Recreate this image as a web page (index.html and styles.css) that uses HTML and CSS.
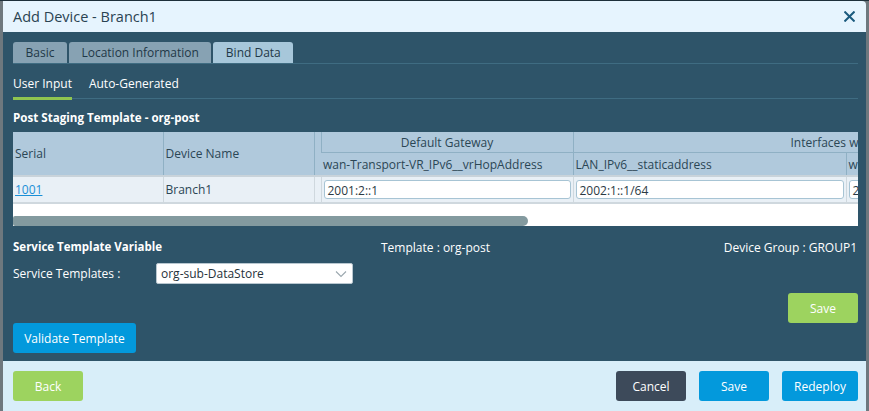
FILE: index.html
```html
<!DOCTYPE html>
<html>
<head>
<meta charset="utf-8">
<link rel="stylesheet" href="styles.css">
</head>
<body>
<div class="dialog">
  <div class="header">
    <span class="title">Add Device - Branch1</span>
    <svg class="close" width="11" height="11" viewBox="0 0 11 11"><path d="M1.2 1.2 L9.8 9.8 M9.8 1.2 L1.2 9.8" stroke="#1b5a7e" stroke-width="2" stroke-linecap="square"/></svg>
  </div>
  <div class="body">
    <div class="tabs">
      <div class="tab">Basic</div>
      <div class="tab">Location Information</div>
      <div class="tab active">Bind Data</div>
    </div>
    <div class="subtabs">
      <div class="subtab active">User Input</div>
      <div class="subtab">Auto-Generated</div>
    </div>
    <div class="section-title">Post Staging Template - org-post</div>
    <div class="grid-wrap">
      <table class="grid">
        <colgroup>
          <col class="c-serial"><col class="c-name"><col class="c-gap"><col class="c-gw"><col class="c-lan"><col class="c-w">
        </colgroup>
        <thead>
          <tr class="h1">
            <th rowspan="2" class="left">Serial</th>
            <th rowspan="2" class="left">Device Name</th>
            <th rowspan="2"></th>
            <th class="group">Default Gateway</th>
            <th colspan="2" class="group wide">Interfaces wan-Transport</th>
          </tr>
          <tr class="h2">
            <th class="left">wan-Transport-VR_IPv6__vrHopAddress</th>
            <th class="left">LAN_IPv6__staticaddress</th>
            <th class="left">wan</th>
          </tr>
        </thead>
        <tbody>
          <tr class="row">
            <td><a class="link">1001</a></td>
            <td>Branch1</td>
            <td></td>
            <td><div class="inp">2001:2::1</div></td>
            <td><div class="inp">2002:1::1/64</div></td>
            <td><div class="inp">2</div></td>
          </tr>
        </tbody>
      </table>
      <div class="scroll"><div class="thumb"></div></div>
    </div>
    <div class="info">
      <div class="info-title">Service Template Variable</div>
      <div class="info-mid">Template : org-post</div>
      <div class="info-right">Device Group : GROUP1</div>
    </div>
    <div class="svc">
      <span class="svc-label">Service Templates :</span>
      <div class="select">org-sub-DataStore
        <svg class="chev" width="12" height="8" viewBox="0 0 12 8"><path d="M1 1.5 L6 6.5 L11 1.5" fill="none" stroke="#9aa7ae" stroke-width="1.1"/></svg>
      </div>
    </div>
    <div class="save-row"><button class="btn green">Save</button></div>
    <div class="validate-row"><button class="btn blue validate">Validate Template</button></div>
  </div>
  <div class="footer">
    <button class="btn green">Back</button>
    <div class="spacer"></div>
    <button class="btn dark">Cancel</button>
    <button class="btn blue">Save</button>
    <button class="btn blue redeploy">Redeploy</button>
  </div>
</div>
</body>
</html>
```
FILE: styles.css
```css
html, body {
  margin: 0;
  padding: 0;
}
body {
  background: #6e787e;
  font-family: "Open Sans", "Noto Sans", sans-serif;
  font-size: 12px;
  width: 869px;
  height: 411px;
  overflow: hidden;
  border-top: 1px solid #1d2f3a;
  box-sizing: border-box;
}
.dialog {
  margin-left: 3px;
  width: 863px;
  height: 410px;
  display: flex;
  flex-direction: column;
  border-top-right-radius: 4px;
  overflow: hidden;
}
.header {
  background: #e6f4fe;
  height: 31px;
  display: flex;
  align-items: center;
  padding: 0 11px 0 10px;
  flex: none;
}
.title {
  flex: 1;
  color: #2a4352;
  font-size: 14.5px;
}
.close {
  display: block;
}
.body {
  background: #2e5469;
  flex: 1;
  padding: 10px 8px 0 10px;
  color: #fff;
}
.tabs {
  display: flex;
  gap: 2px;
  border-bottom: 1px solid #3f6c82;
  height: 21px;
}
.tab {
  background: #87a2b3;
  color: #1f3847;
  padding: 0 12.5px;
  line-height: 21px;
  font-size: 12px;
  border-radius: 3px 3px 0 0;
}
.tab.active {
  background: #a7c7da;
}
.subtabs {
  display: flex;
  gap: 17px;
  border-bottom: 1px solid #3f6c82;
  height: 35px;
  box-sizing: border-box;
}
.subtab {
  font-size: 12px;
  padding-top: 11px;
  color: #fff;
  height: 34px;
  box-sizing: border-box;
}
.subtab.active {
  border-bottom: 3px solid #8fc550;
  height: 36px;
}
.section-title {
  font-weight: bold;
  font-size: 11.6px;
  margin-top: 11px;
  height: 22px;
}
.grid-wrap {
  width: 845px;
  height: 94px;
  background: #fff;
  overflow: hidden;
  position: relative;
}
.grid {
  border-collapse: collapse;
  table-layout: fixed;
  width: 1100px;
  color: #2b4655;
  font-size: 12px;
}
.c-serial { width: 150px; }
.c-name { width: 151px; }
.c-gap { width: 7px; }
.c-gw { width: 252px; }
.c-lan { width: 273px; }
.c-w { width: 267px; }
.grid th {
  background: #b0c9dc;
  font-weight: normal;
  padding: 0 2px;
  white-space: nowrap;
  overflow: hidden;
  border-left: 1px solid #8fb0c4;
}
.grid th:first-child { border-left: none; }
.grid th.left { text-align: left; }
.h1 th { height: 20px; }
.h1 th.group { text-align: center; border-bottom: 1px solid #8fb0c4; }
.h1 th.wide { text-align: left; padding-left: 217px; }
.h2 th { height: 22px; }
.grid thead { border-bottom: 2px solid #c9d3da; }
.row td {
  background: #e9f0f6;
  height: 25px;
  padding: 0 2px;
  border-left: 1px solid #cfd8de;
  border-bottom: 2px solid #cfd8de;
  white-space: nowrap;
  overflow: hidden;
}
.row td:first-child { border-left: none; }
.link {
  color: #1a8fd6;
  text-decoration: underline;
}
.inp {
  background: #fff;
  border: 1px solid #a7c4d4;
  border-radius: 3px;
  height: 19px;
  line-height: 19px;
  padding: 0 3px;
  box-sizing: border-box;
  color: #2b3a44;
}
.scroll {
  position: absolute;
  left: 0;
  bottom: 0;
  width: 845px;
  height: 10px;
}
.thumb {
  width: 515px;
  height: 10px;
  background: #839a9f;
  border-radius: 2px 5px 5px 2px;
}
.info {
  display: flex;
  margin-top: 13px;
  height: 17px;
  font-size: 12px;
}
.info-title {
  font-weight: bold;
  font-size: 11.5px;
  width: 368px;
}
.info-mid { flex: 1; }
.info-right { margin-right: 1px; }
.svc {
  display: flex;
  align-items: center;
  margin-top: 7px;
  height: 21px;
}
.svc-label {
  width: 143px;
}
.select {
  width: 197px;
  height: 21px;
  box-sizing: border-box;
  background: #fff;
  border: 1px solid #b8c7d0;
  border-radius: 2px;
  color: #26323a;
  padding: 0 0 0 4px;
  line-height: 19px;
  position: relative;
}
.chev {
  position: absolute;
  right: 5px;
  top: 6px;
}
.save-row {
  display: flex;
  justify-content: flex-end;
  margin-top: 9px;
}
.btn {
  font-family: "Open Sans", "Noto Sans", sans-serif;
  font-size: 12px;
  color: #fff;
  border: none;
  border-radius: 3px;
  height: 30px;
  width: 70px;
  padding: 0;
  display: block;
}
.green { background: #9dd35f; }
.blue { background: #0399dc; }
.dark { background: #3d4a5a; }
.validate { width: 123px; }
.redeploy { width: 76px; }
.footer {
  background: #d8eef9;
  height: 50px;
  flex: none;
  display: flex;
  align-items: center;
  padding: 0 8px 0 10px;
  gap: 13px;
}
.spacer { flex: 1; }
```
